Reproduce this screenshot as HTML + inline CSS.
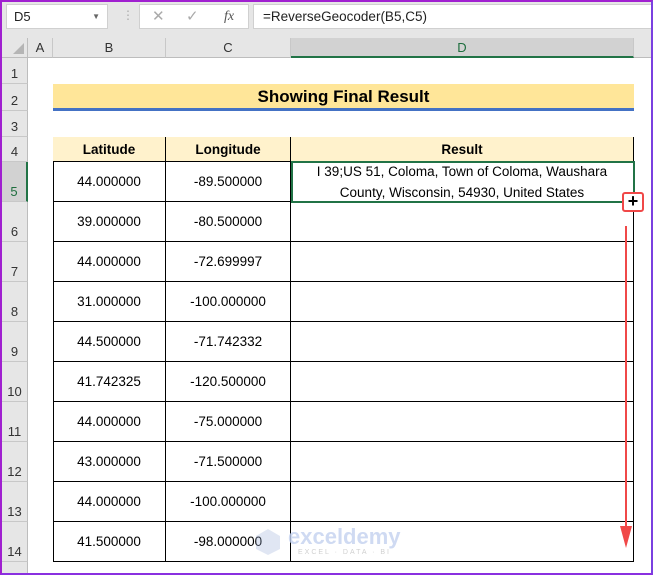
<!DOCTYPE html>
<html><head><meta charset="utf-8"><style>
*{margin:0;padding:0;box-sizing:border-box}
body{width:653px;height:575px;overflow:hidden;background:#fff;font-family:"Liberation Sans",Calibri,sans-serif;position:relative}
.a{position:absolute}
.frame{left:0;top:0;width:653px;height:575px;border:2px solid #a020d0;border-right-color:#7a40e0;border-bottom-color:#8a30e0;z-index:50;pointer-events:none}
.rh{position:absolute;left:2px;width:26px;background:#e6e6e6;border-bottom:1px solid #c8c8c8;border-right:1px solid #bdbdbd;font-size:13px;color:#333;text-align:center;display:flex;align-items:flex-end;justify-content:center;padding-bottom:2px}
.ch{position:absolute;top:38px;height:20px;background:#e6e6e6;border-right:1px solid #c8c8c8;border-bottom:1px solid #bdbdbd;font-size:13px;color:#333;text-align:center;line-height:20px}
.cell{position:absolute;display:flex;align-items:center;justify-content:center;font-size:13.5px;color:#000;border-right:1.5px solid #000;border-bottom:1.5px solid #000}
</style></head><body>
<div class="a" style="left:0;top:0;width:653px;height:38px;background:#e6e6e6"></div>
<div class="a" style="left:6px;top:4px;width:102px;height:25px;background:#fff;border:1px solid #d0d0d0;font-size:13px;line-height:23px;padding-left:7px;color:#222">D5<span style="position:absolute;right:7px;top:0;font-size:8px;color:#666">▼</span></div>
<div class="a" style="left:122px;top:8px;color:#aaa;font-size:12px">⋮</div>
<div class="a" style="left:139px;top:4px;width:110px;height:25px;background:#fff;border:1px solid #d0d0d0;color:#aaa;font-size:15px;line-height:23px"><span style="position:absolute;left:12px">✕</span><span style="position:absolute;left:46px">✓</span><span style="position:absolute;left:84px;font-family:'Liberation Serif',serif;font-style:italic;color:#555;font-size:14px">fx</span></div>
<div class="a" style="left:253px;top:4px;width:400px;height:25px;background:#fff;border:1px solid #d0d0d0;font-size:13.5px;line-height:23px;padding-left:9px;color:#222">=ReverseGeocoder(B5,C5)</div>
<div class="a" style="left:2px;top:38px;width:26px;height:20px;background:#e6e6e6;border-right:1px solid #bdbdbd;border-bottom:1px solid #bdbdbd"><div style="position:absolute;right:3px;bottom:3px;width:0;height:0;border-left:11px solid transparent;border-bottom:11px solid #b5b5b5"></div></div>
<div class="ch" style="left:28px;width:25px">A</div>
<div class="ch" style="left:53px;width:113px">B</div>
<div class="ch" style="left:166px;width:125px">C</div>
<div class="ch" style="left:291px;width:343px;background:#d2d2d2;color:#1e6e3e;border-bottom:2px solid #217346">D</div>
<div class="ch" style="left:634px;width:19px"></div>
<div class="rh" style="top:58px;height:26px">1</div>
<div class="rh" style="top:84px;height:27px">2</div>
<div class="rh" style="top:111px;height:26px">3</div>
<div class="rh" style="top:137px;height:25px">4</div>
<div class="rh" style="top:162px;height:40px;background:#d2d2d2;color:#1e6e3e;border-right:2px solid #217346">5</div>
<div class="rh" style="top:202px;height:40px">6</div>
<div class="rh" style="top:242px;height:40px">7</div>
<div class="rh" style="top:282px;height:40px">8</div>
<div class="rh" style="top:322px;height:40px">9</div>
<div class="rh" style="top:362px;height:40px">10</div>
<div class="rh" style="top:402px;height:40px">11</div>
<div class="rh" style="top:442px;height:40px">12</div>
<div class="rh" style="top:482px;height:40px">13</div>
<div class="rh" style="top:522px;height:40px">14</div>
<div class="rh" style="top:562px;height:12px"></div>
<div class="a" style="left:53px;top:84px;width:581px;height:27px;background:#ffe699;border-bottom:3px solid #4472c4;font-weight:bold;font-size:17px;text-align:center;line-height:26px">Showing Final Result</div>
<div class="a" style="left:53px;top:137px;width:581px;height:425px;border-left:1.5px solid #000;border-top:1.5px solid #000"></div>
<div class="cell" style="left:53px;top:137px;width:113px;height:25px;background:#fff2cc;font-weight:bold">Latitude</div>
<div class="cell" style="left:166px;top:137px;width:125px;height:25px;background:#fff2cc;font-weight:bold">Longitude</div>
<div class="cell" style="left:291px;top:137px;width:343px;height:25px;background:#fff2cc;font-weight:bold">Result</div>
<div class="cell" style="left:53px;top:162px;width:113px;height:40px">44.000000</div><div class="cell" style="left:166px;top:162px;width:125px;height:40px">-89.500000</div><div class="cell" style="left:291px;top:162px;width:343px;height:40px;text-align:center;line-height:21px;font-size:13.5px">I 39;US 51, Coloma, Town of Coloma, Waushara<br>County, Wisconsin, 54930, United States</div>
<div class="cell" style="left:53px;top:202px;width:113px;height:40px">39.000000</div><div class="cell" style="left:166px;top:202px;width:125px;height:40px">-80.500000</div><div class="cell" style="left:291px;top:202px;width:343px;height:40px"></div>
<div class="cell" style="left:53px;top:242px;width:113px;height:40px">44.000000</div><div class="cell" style="left:166px;top:242px;width:125px;height:40px">-72.699997</div><div class="cell" style="left:291px;top:242px;width:343px;height:40px"></div>
<div class="cell" style="left:53px;top:282px;width:113px;height:40px">31.000000</div><div class="cell" style="left:166px;top:282px;width:125px;height:40px">-100.000000</div><div class="cell" style="left:291px;top:282px;width:343px;height:40px"></div>
<div class="cell" style="left:53px;top:322px;width:113px;height:40px">44.500000</div><div class="cell" style="left:166px;top:322px;width:125px;height:40px">-71.742332</div><div class="cell" style="left:291px;top:322px;width:343px;height:40px"></div>
<div class="cell" style="left:53px;top:362px;width:113px;height:40px">41.742325</div><div class="cell" style="left:166px;top:362px;width:125px;height:40px">-120.500000</div><div class="cell" style="left:291px;top:362px;width:343px;height:40px"></div>
<div class="cell" style="left:53px;top:402px;width:113px;height:40px">44.000000</div><div class="cell" style="left:166px;top:402px;width:125px;height:40px">-75.000000</div><div class="cell" style="left:291px;top:402px;width:343px;height:40px"></div>
<div class="cell" style="left:53px;top:442px;width:113px;height:40px">43.000000</div><div class="cell" style="left:166px;top:442px;width:125px;height:40px">-71.500000</div><div class="cell" style="left:291px;top:442px;width:343px;height:40px"></div>
<div class="cell" style="left:53px;top:482px;width:113px;height:40px">44.000000</div><div class="cell" style="left:166px;top:482px;width:125px;height:40px">-100.000000</div><div class="cell" style="left:291px;top:482px;width:343px;height:40px"></div>
<div class="cell" style="left:53px;top:522px;width:113px;height:40px">41.500000</div><div class="cell" style="left:166px;top:522px;width:125px;height:40px">-98.000000</div><div class="cell" style="left:291px;top:522px;width:343px;height:40px"></div>
<div class="a" style="left:291px;top:161px;width:344px;height:42px;border:2px solid #217346"></div>
<div class="a" style="left:622px;top:192px;width:22px;height:20px;border:2px solid #f04848;border-radius:3px;background:#fff;font-size:18px;font-weight:bold;line-height:15px;text-align:center;color:#000">+</div>
<svg class="a" style="left:618px;top:226px" width="16" height="324"><line x1="8" y1="0" x2="8" y2="305" stroke="#f04848" stroke-width="2"/><polygon points="2,300 14,300 8,322" fill="#f04848"/></svg>
<div class="a" style="left:255px;top:528px;opacity:.3"><svg width="26" height="28"><polygon points="13,1 25,8 25,21 13,27 1,21 1,8" fill="#9bb0d8"/></svg></div>
<div class="a" style="left:288px;top:524px;font-size:22px;font-weight:bold;color:#c4d2f0;opacity:.8">exceldemy</div>
<div class="a" style="left:298px;top:549px;font-size:7px;letter-spacing:2px;color:#d0d0d0">EXCEL · DATA · BI</div>
<div class="a frame"></div>
</body></html>
